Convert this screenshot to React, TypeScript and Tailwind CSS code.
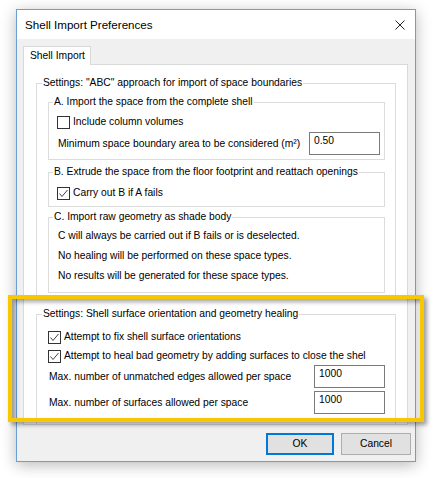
import type { ReactNode } from "react"

function Group({
  title,
  className = "",
  legendClass = "ml-[5px]",
  bodyClass = "",
  children,
}: {
  title: string
  className?: string
  legendClass?: string
  bodyClass?: string
  children: ReactNode
}) {
  return (
    <fieldset className={`min-w-0 border border-[#dcdcdc] ${className}`}>
      <legend className={`px-[1px] leading-4 ${legendClass}`}>{title}</legend>
      <div className={bodyClass}>{children}</div>
    </fieldset>
  )
}

function Check({ label, checked = false }: { label: string; checked?: boolean }) {
  return (
    <div className="flex h-4 items-center gap-[3px]">
      <span className="flex h-[13px] w-[13px] shrink-0 items-center justify-center border border-[#333333] bg-white">
        {checked && (
          <svg width="11" height="11" viewBox="0 0 11 11">
            <path d="M1.5 5.5 L4 8.5 L9.5 2" fill="none" stroke="#444444" strokeWidth="1" />
          </svg>
        )}
      </span>
      <span className="whitespace-nowrap">{label}</span>
    </div>
  )
}

function NumBox({ value }: { value: string }) {
  return (
    <div className="h-[23px] w-[71px] shrink-0 border border-[#7a7a7a] bg-white pl-[4px] leading-4">
      {value}
    </div>
  )
}

function FieldRow({ label, value, className = "" }: { label: string; value: string; className?: string }) {
  return (
    <div className={`flex items-center gap-2 ${className}`}>
      <span className="ml-[1px] min-w-0 flex-1 whitespace-nowrap">{label}</span>
      <NumBox value={value} />
    </div>
  )
}

export default function App() {
  return (
    <div className="relative h-[478px] w-[434px] overflow-hidden bg-white pl-[16px] pt-[9px] font-['Liberation_Sans',Arial,sans-serif] text-[10.3px] text-black">
      <div className="flex h-[453px] w-[400px] flex-col border border-[#6a9fd6] bg-[#f0f0f0] shadow-[0_3px_14px_rgba(0,0,0,0.28)]">
        {/* title bar */}
        <div className="flex h-[29px] items-center justify-between bg-white pl-[8px] pr-[10px]">
          <span className="text-[11.6px]">Shell Import Preferences</span>
          <svg width="10" height="10" viewBox="0 0 10 10">
            <path d="M0.5 0.5 L9.5 9.5 M9.5 0.5 L0.5 9.5" stroke="#222222" strokeWidth="1" />
          </svg>
        </div>

        <div className="flex flex-1 flex-col pl-[6px] pr-[7px] pt-[7px]">
          {/* tab header */}
          <div className="relative z-10 -mb-px flex h-[19px] w-[68px] items-center border border-b-0 border-[#d9d9d9] bg-white pl-[6px]">
            Shell Import
          </div>

          {/* tab page */}
          <div className="h-[361px] overflow-hidden border border-[#d9d9d9] bg-white pl-[12px] pr-[11px] pt-[10px]">
            <Group
              title={'Settings: "ABC" approach for import of space boundaries'}
              bodyClass="pl-[11px] pr-[10px] pb-[5px]"
            >
              <Group
                title="A. Import the space from the complete shell"
                className="mt-[3px]"
                legendClass="ml-[4px]"
                bodyClass="pl-[8px] pr-[4px] pt-[4px] pb-[4px]"
              >
                <Check label="Include column volumes" />
                <FieldRow
                  className="mt-[2px]"
                  label="Minimum space boundary area to be considered (m²)"
                  value="0.50"
                />
              </Group>

              <Group
                title="B. Extrude the space from the floor footprint and reattach openings"
                className="mt-[4px]"
                legendClass="ml-[4px]"
                bodyClass="pl-[8px] pt-[5px] pb-[5px]"
              >
                <Check label="Carry out B if A fails" checked />
              </Group>

              <Group
                title="C. Import raw geometry as shade body"
                className="mt-[2px]"
                legendClass="ml-[4px]"
                bodyClass="pl-[9px] pt-[1px] pb-[6px] leading-5"
              >
                <p>C will always be carried out if B fails or is deselected.</p>
                <p>No healing will be performed on these space types.</p>
                <p>No results will be generated for these space types.</p>
              </Group>
            </Group>

            <Group
              title="Settings: Shell surface orientation and geometry healing"
              className="mt-[7px]"
              bodyClass="pl-[11px] pr-[10px] pt-[7px] pb-[20px]"
            >
              <Check label="Attempt to fix shell surface orientations" checked />
              <div className="mt-[3px]">
                <Check label="Attempt to heal bad geometry by adding surfaces to close the shel" checked />
              </div>
              <FieldRow className="mt-[1px]" label="Max. number of unmatched edges allowed per space" value="1000" />
              <FieldRow className="mt-[3px]" label="Max. number of surfaces allowed per space" value="1000" />
            </Group>
          </div>

          {/* dialog buttons */}
          <div className="-mr-[3px] mt-[8px] flex justify-end gap-[7px]">
            <button className="h-[22px] w-[68px] border-2 border-[#0078d7] bg-[#e1e1e1]">OK</button>
            <button className="h-[22px] w-[70px] border border-[#adadad] bg-[#e1e1e1]">Cancel</button>
          </div>
        </div>
      </div>

      {/* highlight frame over the healing settings */}
      <div className="pointer-events-none absolute left-[8px] top-[295px] h-[127px] w-[416px] border-4 border-[#f9c700] shadow-[3px_3px_4px_rgba(0,0,0,0.35),inset_3px_3px_4px_rgba(0,0,0,0.35)]" />
    </div>
  )
}
